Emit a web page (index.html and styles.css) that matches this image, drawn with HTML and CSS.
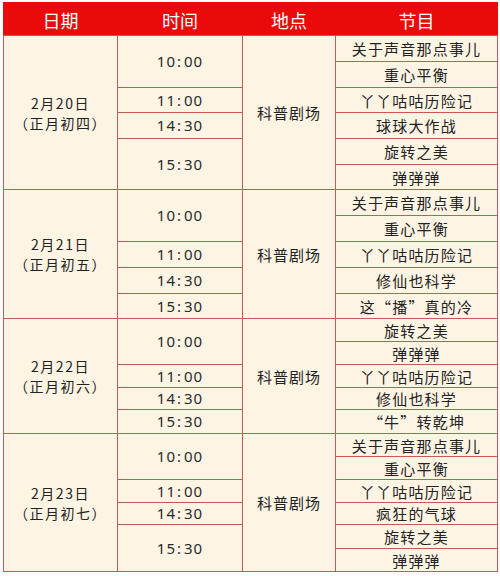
FILE: index.html
```html
<!DOCTYPE html>
<html lang="zh-CN">
<head>
<meta charset="utf-8">
<title>科普剧场节目表</title>
<link rel="stylesheet" href="styles.css">
</head>
<body>
<div class="schedule">
  <div class="head">
    <div class="hcell">日期</div>
    <div class="hcell">时间</div>
    <div class="hcell">地点</div>
    <div class="hcell">节目</div>
  </div>
  <div class="grid">
    <!-- 2月20日 -->
    <div class="cell date s6">2月20日<br>（正月初四）</div>
    <div class="cell time s2">10<span class="colon">:</span>00</div>
    <div class="cell place s6">科普剧场</div>
    <div class="cell prog">关于声音那点事儿</div>
    <div class="cell prog">重心平衡</div>
    <div class="cell time">11<span class="colon">:</span>00</div>
    <div class="cell prog">丫丫咕咕历险记</div>
    <div class="cell time">14<span class="colon">:</span>30</div>
    <div class="cell prog">球球大作战</div>
    <div class="cell time s2">15<span class="colon">:</span>30</div>
    <div class="cell prog">旋转之美</div>
    <div class="cell prog">弹弹弹</div>

    <!-- 2月21日 -->
    <div class="cell date s5">2月21日<br>（正月初五）</div>
    <div class="cell time s2">10<span class="colon">:</span>00</div>
    <div class="cell place s5">科普剧场</div>
    <div class="cell prog">关于声音那点事儿</div>
    <div class="cell prog">重心平衡</div>
    <div class="cell time">11<span class="colon">:</span>00</div>
    <div class="cell prog">丫丫咕咕历险记</div>
    <div class="cell time">14<span class="colon">:</span>30</div>
    <div class="cell prog">修仙也科学</div>
    <div class="cell time">15<span class="colon">:</span>30</div>
    <div class="cell prog">这“播”真的冷</div>

    <!-- 2月22日 -->
    <div class="cell date s5">2月22日<br>（正月初六）</div>
    <div class="cell time s2">10<span class="colon">:</span>00</div>
    <div class="cell place s5">科普剧场</div>
    <div class="cell prog">旋转之美</div>
    <div class="cell prog">弹弹弹</div>
    <div class="cell time">11<span class="colon">:</span>00</div>
    <div class="cell prog">丫丫咕咕历险记</div>
    <div class="cell time">14<span class="colon">:</span>30</div>
    <div class="cell prog">修仙也科学</div>
    <div class="cell time">15<span class="colon">:</span>30</div>
    <div class="cell prog">“牛”转乾坤</div>

    <!-- 2月23日 -->
    <div class="cell date s6">2月23日<br>（正月初七）</div>
    <div class="cell time s2">10<span class="colon">:</span>00</div>
    <div class="cell place s6">科普剧场</div>
    <div class="cell prog">关于声音那点事儿</div>
    <div class="cell prog">重心平衡</div>
    <div class="cell time">11<span class="colon">:</span>00</div>
    <div class="cell prog">丫丫咕咕历险记</div>
    <div class="cell time">14<span class="colon">:</span>30</div>
    <div class="cell prog">疯狂的气球</div>
    <div class="cell time s2">15<span class="colon">:</span>30</div>
    <div class="cell prog">旋转之美</div>
    <div class="cell prog">弹弹弹</div>
  </div>
</div>
</body>
</html>
```

FILE: styles.css
```css
html, body {
  margin: 0;
  padding: 0;
  background: #ffffff;
}

body {
  font-family: "Noto Sans CJK SC", "Noto Sans", sans-serif;
  color: #222222;
}

.schedule {
  margin: 2px 0 0 3px;
  width: 495px;
}

.head {
  display: grid;
  grid-template-columns: 113px 124px 92px 161px;
  column-gap: 1px;
  padding: 0 1px;
  height: 33px;
  background: #ea0a0a;
}

.hcell {
  display: flex;
  align-items: center;
  justify-content: center;
  padding-top: 3px;
  color: #ffffff;
  font-size: 18px;
  line-height: 1;
}

.grid {
  display: grid;
  grid-template-columns: 113px 124px 92px 161px;
  grid-template-rows:
    25px 25px 24px 25px 25px 24px
    25px 25px 25px 25px 24px
    22px 22px 22px 21px 23px
    22px 22px 22px 21px 23px 22px;
  gap: 1px;
  padding: 1px;
  background: #c65a55;
}

.cell {
  background: #fdf4e4;
  display: flex;
  align-items: center;
  justify-content: center;
  text-align: center;
  line-height: 1;
  white-space: nowrap;
}

.date {
  grid-column: 1;
  font-size: 14px;
  letter-spacing: 1.5px;
  line-height: 20px;
}

.time {
  grid-column: 2;
  font-size: 15px;
  letter-spacing: 1px;
  font-family: "Noto Sans", "Noto Sans CJK SC", sans-serif;
  color: #2a2a2a;
}

.colon {
  margin: 0 2px 0 1px;
}

.place {
  grid-column: 3;
  font-size: 15px;
  letter-spacing: 1px;
}

.prog {
  grid-column: 4;
  font-size: 15px;
  letter-spacing: 1.2px;
}

.s2 { grid-row: span 2; }
.s5 { grid-row: span 5; }
.s6 { grid-row: span 6; }
```
